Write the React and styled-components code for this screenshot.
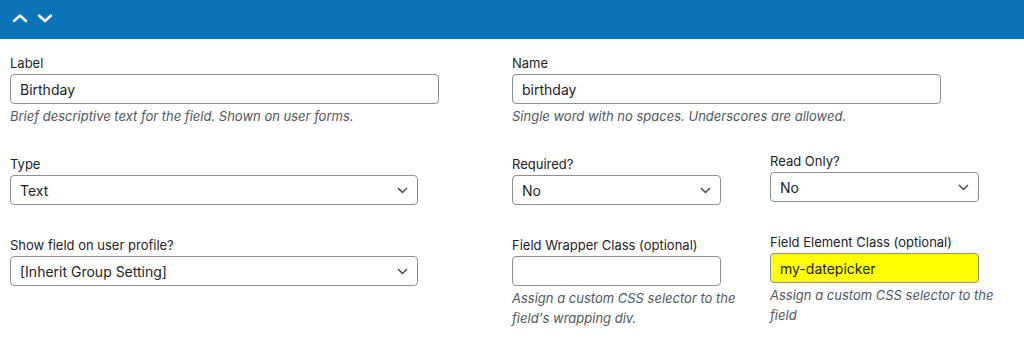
import React from "react";
import styled, { createGlobalStyle } from "styled-components";

const GlobalStyle = createGlobalStyle`
  body {
    margin: 0;
    background: #fff;
    font-family: Inter, "Liberation Sans", Arial, sans-serif;
    color: #1d2327;
  }
`;

const TopBar = styled.div`
  height: 39px;
  background: #0a74b8;
  display: flex;
  align-items: center;
  gap: 9px;
  padding-left: 12px;
  padding-bottom: 3px;
  box-sizing: border-box;

  & svg {
    display: block;
  }
`;

const Panel = styled.div`
  padding: 16px 10px 0;
  display: flex;
  flex-direction: column;
`;

const Row = styled.div`
  display: grid;
  grid-template-columns: 502px 258px 1fr;
  align-items: start;
  margin-bottom: ${(p) => p.$gap}px;
`;

const Field = styled.div`
  grid-column: ${(p) => p.$span || "auto"};
  display: flex;
  flex-direction: column;
  align-items: flex-start;
  padding-right: 16px;
  margin-top: ${(p) => (p.$raised ? -3 : 0)}px;
`;

const Label = styled.label`
  font-size: 13px;
  line-height: 17px;
  margin-bottom: 2px;
`;

const Control = styled.div`
  position: relative;
  width: ${(p) => p.$width}px;
`;

const TextInput = styled.input`
  box-sizing: border-box;
  display: block;
  height: 30px;
  width: 100%;
  border: 1px solid #8c8f94;
  border-radius: 4px;
  padding: 0 9px;
  font-family: inherit;
  font-size: 14px;
  color: #1d2327;
  background: ${(p) => (p.$highlight ? "#ffff00" : "#fff")};
  outline: none;
`;

const Select = styled.select`
  box-sizing: border-box;
  display: block;
  appearance: none;
  -webkit-appearance: none;
  height: 30px;
  width: 100%;
  border: 1px solid #8c8f94;
  border-radius: 4px;
  padding: 0 30px 0 9px;
  font-family: inherit;
  font-size: 14px;
  color: #1d2327;
  background: #fff;
  outline: none;
`;

const Chevron = styled.svg`
  position: absolute;
  right: 10px;
  top: 12px;
  pointer-events: none;
`;

const Help = styled.p`
  margin: 2px 0 0;
  font-size: 13px;
  line-height: 20px;
  font-style: italic;
  color: #50575e;
`;

const Arrow = ({ up }) => (
  <svg width="16" height="10" viewBox="0 0 16 10">
    <path
      d={up ? "M2 8 L8 2.5 L14 8" : "M2 2.5 L8 8 L14 2.5"}
      fill="none"
      stroke="#fff"
      strokeWidth="2.4"
      strokeLinecap="round"
      strokeLinejoin="round"
    />
  </svg>
);

const Dropdown = ({ value, width }) => (
  <Control $width={width}>
    <Select defaultValue={value}>
      <option>{value}</option>
    </Select>
    <Chevron width="11" height="7" viewBox="0 0 11 7">
      <path d="M1 1 L5.5 5.5 L10 1" fill="none" stroke="#3c434a" strokeWidth="1.4" />
    </Chevron>
  </Control>
);

const Text = ({ value, width, highlight }) => (
  <Control $width={width}>
    <TextInput defaultValue={value} $highlight={highlight} />
  </Control>
);

const App = () => {
  return (
    <>
      <GlobalStyle />
      <TopBar>
        <Arrow up />
        <Arrow />
      </TopBar>
      <Panel>
        <Row $gap={30}>
          <Field>
            <Label>Label</Label>
            <Text value="Birthday" width={429} />
            <Help>Brief descriptive text for the field. Shown on user forms.</Help>
          </Field>
          <Field $span="2 / 4">
            <Label>Name</Label>
            <Text value="birthday" width={429} />
            <Help>Single word with no spaces. Underscores are allowed.</Help>
          </Field>
        </Row>
        <Row $gap={32}>
          <Field>
            <Label>Type</Label>
            <Dropdown value="Text" width={408} />
          </Field>
          <Field>
            <Label>Required?</Label>
            <Dropdown value="No" width={209} />
          </Field>
          <Field $raised>
            <Label>Read Only?</Label>
            <Dropdown value="No" width={209} />
          </Field>
        </Row>
        <Row $gap={0}>
          <Field>
            <Label>Show field on user profile?</Label>
            <Dropdown value="[Inherit Group Setting]" width={408} />
          </Field>
          <Field>
            <Label>Field Wrapper Class (optional)</Label>
            <Text width={209} />
            <Help>Assign a custom CSS selector to the field's wrapping div.</Help>
          </Field>
          <Field $raised>
            <Label>Field Element Class (optional)</Label>
            <Text value="my-datepicker" width={209} highlight />
            <Help>Assign a custom CSS selector to the field</Help>
          </Field>
        </Row>
      </Panel>
    </>
  );
};

export default App;
